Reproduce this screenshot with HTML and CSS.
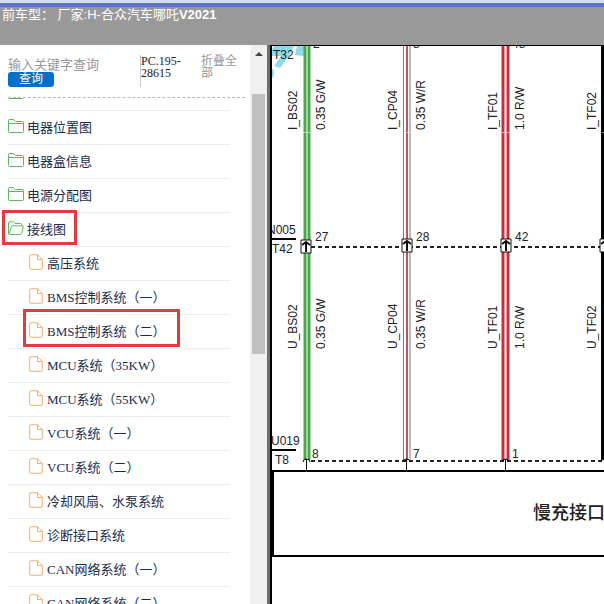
FILE: index.html
```html
<!DOCTYPE html>
<html lang="zh-CN">
<head>
    <meta charset="UTF-8">
    <meta name="viewport" content="width=device-width, initial-scale=1.0">
    <title>电路图查询</title>
    <link rel="stylesheet" href="styles.css">
</head>
<body>
    <!-- 图标 -->
    <svg class="icon-defs" aria-hidden="true">
        <symbol id="icon-folder" viewBox="0 0 16 14">
            <path d="M.5 4.500V1.500Q.5.5 1.500.5H5.500L7.500 2.500H14.500Q15.500 2.500 15.500 3.500V12.500Q15.500 13.500 14.500 13.500H1.500Q.5 13.500.5 12.500ZM.5 4.500H15.500"/>
        </symbol>
        <symbol id="icon-folder-open" viewBox="0 0 16 14">
            <path d="M13.500 5V3.500Q13.500 2.500 12.500 2.500H7L5.500.8H1.500Q.5.8.5 1.800V12.500Q.5 13.500 1.500 13.500H12.500Q13.300 13.500 13.600 12.500L15.400 5.500Q15.500 4.800 14.800 4.800H4.500Q3.800 4.800 3.500 5.500L1 13"/>
        </symbol>
        <symbol id="icon-file" viewBox="0 0 14 16">
            <path d="M2 .7H8.500L13.300 5.500V14Q13.300 15.300 12 15.300H2Q.7 15.300.7 14V2Q.7.7 2 .7ZM8.500.7V5.500H13.300"/>
        </symbol>
    </svg>

    <header class="header">
        <span>前车型： 厂家:H-合众汽车哪吒<b>V2021</b></span>
    </header>

    <div class="main">
        <aside class="sidebar">
            <form class="search">
                <div class="search-box">
                    <input type="text" class="search-input" placeholder="输入关键字查询" aria-label="输入关键字查询">
                    <button type="button" class="search-btn">查询</button>
                </div>
                <div class="doc-no">PC.195-28615</div>
                <a href="#" class="collapse">折叠全部</a>
            </form>

            <nav class="tree">
                <ul class="tree-list">
                    <li><a href="#" class="folder" aria-label="目录"><svg><use href="#icon-folder"/></svg></a></li>
                    <li><a href="#" class="folder"><svg><use href="#icon-folder"/></svg>电器位置图</a></li>
                    <li><a href="#" class="folder"><svg><use href="#icon-folder"/></svg>电器盒信息</a></li>
                    <li><a href="#" class="folder"><svg><use href="#icon-folder"/></svg>电源分配图</a></li>
                    <li><a href="#" class="folder marked"><svg><use href="#icon-folder-open"/></svg>接线图</a></li>
                    <li><a href="#" class="file"><svg><use href="#icon-file"/></svg>高压系统</a></li>
                    <li><a href="#" class="file"><svg><use href="#icon-file"/></svg>BMS控制系统（一）</a></li>
                    <li><a href="#" class="file marked"><svg><use href="#icon-file"/></svg>BMS控制系统（二）</a></li>
                    <li><a href="#" class="file"><svg><use href="#icon-file"/></svg>MCU系统（35KW）</a></li>
                    <li><a href="#" class="file"><svg><use href="#icon-file"/></svg>MCU系统（55KW）</a></li>
                    <li><a href="#" class="file"><svg><use href="#icon-file"/></svg>VCU系统（一）</a></li>
                    <li><a href="#" class="file"><svg><use href="#icon-file"/></svg>VCU系统（二）</a></li>
                    <li><a href="#" class="file"><svg><use href="#icon-file"/></svg>冷却风扇、水泵系统</a></li>
                    <li><a href="#" class="file"><svg><use href="#icon-file"/></svg>诊断接口系统</a></li>
                    <li><a href="#" class="file"><svg><use href="#icon-file"/></svg>CAN网络系统（一）</a></li>
                    <li><a href="#" class="file"><svg><use href="#icon-file"/></svg>CAN网络系统（二）</a></li>
                </ul>
            </nav>
        </aside>

        <div class="scrollbar">
            <svg class="scroll-arrow" viewBox="0 0 8 4"><path d="M0 4L4 0L8 4Z"/></svg>
            <div class="scroll-thumb"></div>
        </div>

        <main class="viewer">
            <svg class="diagram" viewBox="0 0 640 558" width="640" height="558">
                <!-- 水印 -->
                <g class="watermark">
                    <path d="M2 0H22L18 8L8 22L2 20L9 10H0V3Z"/>
                    <path d="M25 0H32V10L23 9Z"/>
                    <path d="M0 22Q4 27 0 32Z"/>
                </g>

                <!-- 导线 -->
                <g class="wire-green">
                    <path d="M33 0V414M37 0V414"/>
                </g>
                <g class="wire-white">
                    <path class="edge" d="M131.500 0V414M138 0V414"/>
                    <path class="core" d="M135 0V414"/>
                </g>
                <g class="wire-red">
                    <path d="M231 0V414M236 0V414"/>
                </g>
                <path class="wire-black" d="M331 0V414"/>
                <path class="seam" d="M0 86.500H640"/>

                <!-- 插接器虚线 -->
                <path class="dash" d="M39 201H640M39 415H640"/>

                <!-- 中间端子 -->
                <g class="pin">
                    <path d="M29 194H39V207H29Z"/>
                    <path d="M130 193H140V206H130Z"/>
                    <path d="M229 193H239V206H229Z"/>
                    <path d="M328 193H338V206H328Z"/>
                </g>
                <g class="pin-arrow">
                    <path d="M34 206V196M30 199L34 196L38 199"/>
                    <path d="M135 205V195M131 198L135 195L139 198"/>
                    <path d="M234 205V195M230 198L234 195L238 198"/>
                    <path d="M333 205V195M329 198L333 195L337 198"/>
                </g>
                <!-- 下端子 -->
                <g class="pin-end">
                    <path d="M31 416Q31 413 34.500 413Q38 413 38 416M34.500 413V425"/>
                    <path d="M131 416Q131 413 134.500 413Q138 413 138 416M134.500 413V425"/>
                    <path d="M230 416Q230 413 233.500 413Q237 413 237 416M233.500 413V425"/>
                    <path d="M329 416Q329 413 332.500 413Q336 413 336 416M332.500 413V425"/>
                </g>

                <path class="rule" d="M0 193H24M0 404H24"/>
                <path class="box-line" d="M640 425H1V510H640"/>

                <g class="wire-label">
                    <text transform="translate(25 84) rotate(-90)">I_BS02</text>
                    <text transform="translate(53 84) rotate(-90)">0.35 G/W</text>
                    <text transform="translate(125 84) rotate(-90)">I_CP04</text>
                    <text transform="translate(153 84) rotate(-90)">0.35 W/R</text>
                    <text transform="translate(225 84) rotate(-90)">I_TF01</text>
                    <text transform="translate(252 84) rotate(-90)">1.0 R/W</text>
                    <text transform="translate(324 84) rotate(-90)">I_TF02</text>

                    <text transform="translate(25 303) rotate(-90)">U_BS02</text>
                    <text transform="translate(53 303) rotate(-90)">0.35 G/W</text>
                    <text transform="translate(125 303) rotate(-90)">U_CP04</text>
                    <text transform="translate(153 303) rotate(-90)">0.35 W/R</text>
                    <text transform="translate(225 303) rotate(-90)">U_TF01</text>
                    <text transform="translate(252 303) rotate(-90)">1.0 R/W</text>
                    <text transform="translate(324 303) rotate(-90)">U_TF02</text>
                </g>

                <g class="pin-label">
                    <text x="41" y="2">2</text>
                    <text x="141" y="2">8</text>
                    <text x="240" y="2">48</text>
                    <text x="1" y="13">T32</text>
                    <text x="-5" y="188">N005</text>
                    <text x="0" y="207">T42</text>
                    <text x="43" y="195">27</text>
                    <text x="144" y="195">28</text>
                    <text x="243" y="195">42</text>
                    <text x="-1" y="399">U019</text>
                    <text x="3" y="418">T8</text>
                    <text x="40" y="412">8</text>
                    <text x="141" y="412">7</text>
                    <text x="240" y="412">1</text>
                </g>
                <text class="box-label" x="261" y="473">慢充接口</text>
            </svg>
        </main>
    </div>
</body>
</html>
```
FILE: styles.css
```css
body {
    margin: 0;
    height: 100vh;
    padding-top: 3px;
    box-sizing: border-box;
    display: flex;
    flex-direction: column;
    overflow: hidden;
    background: #fff;
    font-family: "Liberation Serif", "Noto Sans CJK SC", serif;
    font-size: 13px;
    color: #1c2c4c;
}

a {
    color: inherit;
    text-decoration: none;
}

.icon-defs {
    display: none;
}

/* 顶部 */
.header {
    flex: none;
    height: 38px;
    padding: 0 2px;
    border-top: 4px solid #5b74c6;
    background: #999;
    color: #fff;
    font-family: "Liberation Sans", "Noto Sans CJK SC", sans-serif;
    line-height: 15px;
    white-space: nowrap;
}

.header::before {
    content: "";
    display: block;
    height: 3px;
    margin: -7px -2px 4px;
    background: #d3dff0;
}

.main {
    flex: 1;
    display: flex;
    min-height: 0;
}

/* 左侧目录 */
.sidebar {
    flex: none;
    width: 250px;
    display: flex;
    flex-direction: column;
}

.search {
    flex: none;
    display: flex;
    align-items: flex-start;
    height: 42px;
    margin: 0 5px 0 8px;
    padding-top: 10px;
    border-bottom: 1px dashed #bbb;
    font-size: 12px;
    line-height: 12px;
}

.search-box {
    width: 132px;
    display: flex;
    flex-direction: column;
    align-items: flex-start;
}

.search-input {
    width: 100%;
    height: 17px;
    padding: 3px 0 0;
    border: none;
    outline: none;
    box-sizing: border-box;
    background: none;
    font-family: inherit;
    font-size: 13px;
}

.search-input::placeholder {
    color: #999;
}

.search-btn {
    width: 46px;
    height: 15px;
    padding: 0;
    border: none;
    border-radius: 3px;
    background: #0270cb;
    color: #fff;
    font-family: inherit;
    font-size: 12px;
    line-height: 15px;
    cursor: pointer;
}

.doc-no {
    width: 60px;
    height: 32px;
    border-left: 1px solid #ccc;
    box-sizing: border-box;
    color: #222;
}

.collapse {
    width: 38px;
    margin-left: 1px;
    color: #999;
}

.tree {
    flex: 1;
    overflow: hidden;
}

.tree-list {
    margin: -21px 0 0;
    padding: 0 20px 0 8px;
    list-style: none;
}

.tree-list li {
    height: 33px;
    border-bottom: 1px solid #eee;
}

.tree-list a {
    position: relative;
    display: flex;
    align-items: center;
    width: max-content;
    height: 30px;
    white-space: nowrap;
}

.tree-list svg {
    flex: none;
    fill: none;
}

.folder svg {
    width: 16px;
    height: 14px;
    margin-right: 3px;
    stroke: #5cb860;
}

.file {
    margin-left: 21px;
}

.file svg {
    width: 14px;
    height: 16px;
    margin-right: 4px;
    stroke: #f3b06e;
}

/* 红框标记 */
.marked::after {
    content: "";
    position: absolute;
    inset: -3px -11px -2px -6px;
    border: 3px solid #e23c3c;
}

.file.marked::after {
    inset: -6px -15px -2px -6px;
}

/* 滚动条 */
.scrollbar {
    flex: none;
    width: 17px;
    display: flex;
    flex-direction: column;
    align-items: center;
    background: #f0f0f0;
}

.scroll-arrow {
    width: 8px;
    height: 4px;
    margin: 7px 0 38px;
    fill: #444;
}

.scroll-thumb {
    width: 13px;
    height: 260px;
    background: #c1c1c1;
}

/* 右侧电路图 */
.viewer {
    flex: 1;
    min-width: 0;
    overflow: hidden;
    border-top: 1px solid #000;
    border-left: 2px solid #000;
    box-shadow: -3px 0 0 #6e6e6e;
    margin-left: 3px;
    background: #fff;
}

.diagram {
    display: block;
    fill: none;
    font-family: "Liberation Sans", "Noto Sans CJK SC", sans-serif;
}

.diagram text {
    fill: #222;
}

.watermark {
    fill: #8fdae8;
}

.wire-green {
    stroke: #4aa94a;
    stroke-width: 3;
}

.wire-white .edge {
    stroke: #777;
}

.wire-white .core {
    stroke: #c8505a;
    stroke-width: 2;
}

.wire-red {
    stroke: #c9303c;
    stroke-width: 3;
}

.wire-black {
    stroke: #000;
    stroke-width: 4;
}

.seam {
    stroke: #fff;
    stroke-opacity: .5;
}

.dash {
    stroke: #222;
    stroke-width: 2;
    stroke-dasharray: 4 3;
}

.pin {
    fill: #fff;
    stroke: #111;
}

.pin-arrow {
    stroke: #111;
    stroke-width: 2;
}

.pin-end {
    stroke: #111;
}

.rule,
.box-line {
    stroke: #000;
    stroke-width: 2;
}

.wire-label,
.pin-label {
    font-size: 12px;
}

.box-label {
    font-size: 18px;
    font-weight: 500;
}
```
